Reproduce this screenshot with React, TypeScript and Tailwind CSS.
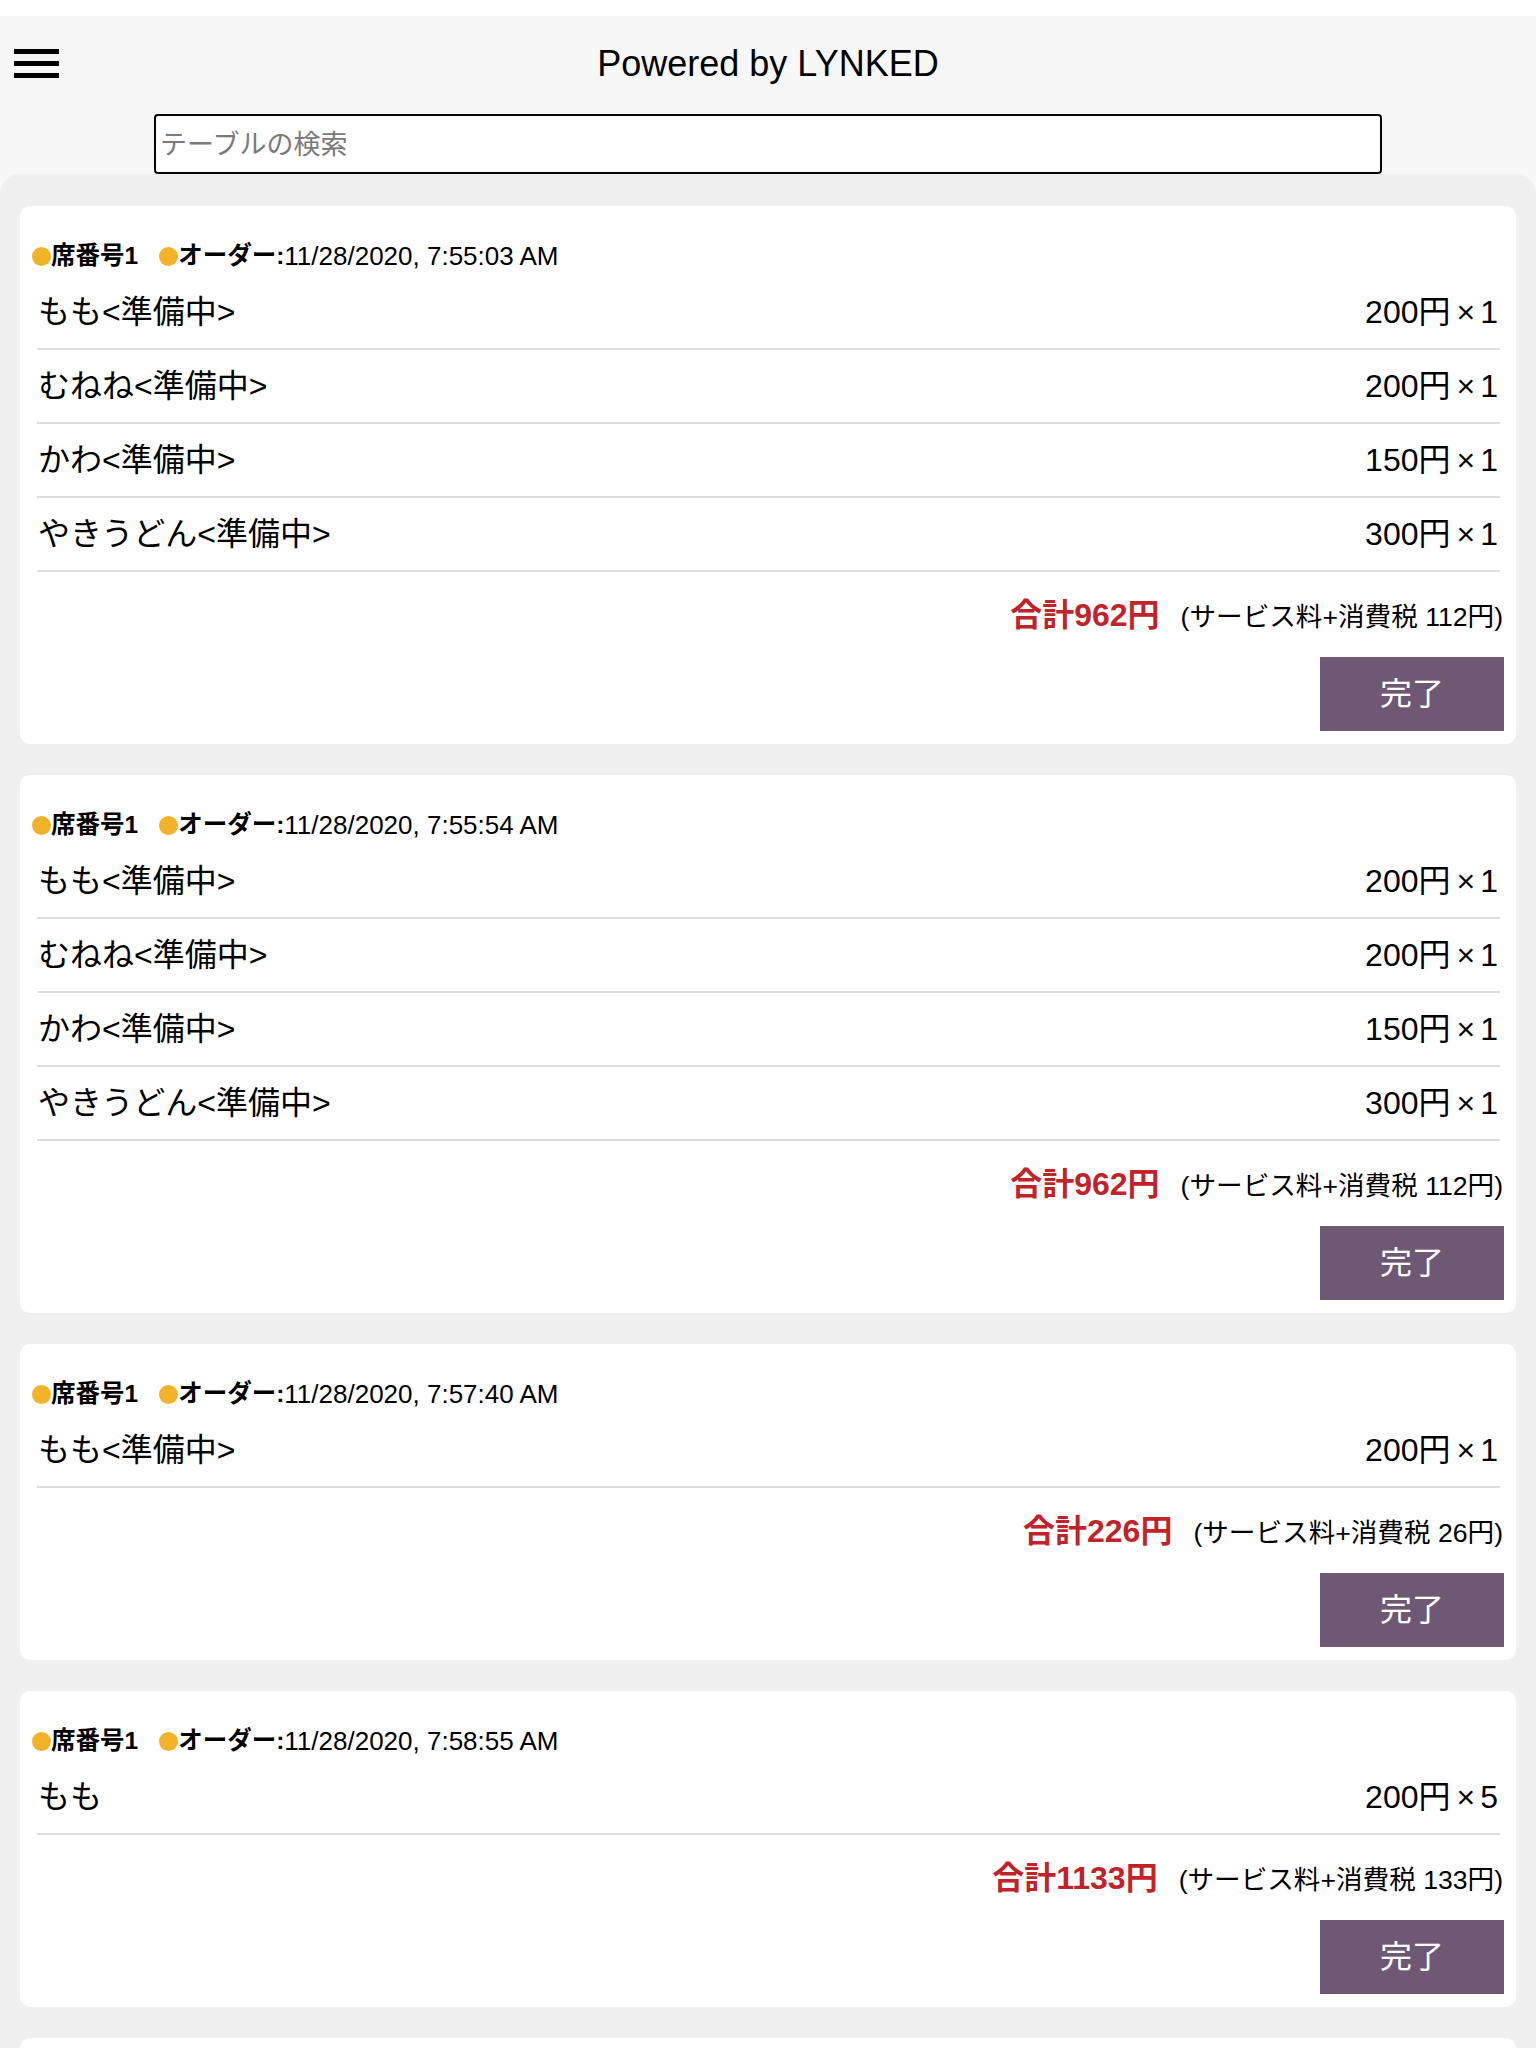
import React from "react";

type Item = { name: string; price: number; qty: number };
type Order = { time: string; items: Item[]; total: number; fee: number };

const four: Item[] = [
  { name: "もも<準備中>", price: 200, qty: 1 },
  { name: "むねね<準備中>", price: 200, qty: 1 },
  { name: "かわ<準備中>", price: 150, qty: 1 },
  { name: "やきうどん<準備中>", price: 300, qty: 1 },
];

const orders: Order[] = [
  { time: "11/28/2020, 7:55:03 AM", items: four, total: 962, fee: 112 },
  { time: "11/28/2020, 7:55:54 AM", items: four, total: 962, fee: 112 },
  {
    time: "11/28/2020, 7:57:40 AM",
    items: [{ name: "もも<準備中>", price: 200, qty: 1 }],
    total: 226,
    fee: 26,
  },
  {
    time: "11/28/2020, 7:58:55 AM",
    items: [{ name: "もも", price: 200, qty: 5 }],
    total: 1133,
    fee: 133,
  },
  {
    time: "11/28/2020, 7:59:30 AM",
    items: [{ name: "かわ", price: 150, qty: 2 }],
    total: 339,
    fee: 39,
  },
];

function Dot() {
  return <span className="inline-block w-[19px] h-[19px] rounded-full bg-[#f2b32a] shrink-0" />;
}

function OrderCard({ order }: { order: Order }) {
  return (
    <div className="bg-white rounded-[10px] pt-[30px] pb-[13px]">
      <div className="h-[40px] pl-[12px] flex items-center text-black">
        <Dot />
        <span className="font-bold text-[24.5px]">席番号1</span>
        <span className="ml-[21px]" />
        <Dot />
        <span className="font-bold text-[24.5px]">オーダー:</span>
        <span className="text-[26px]">{order.time}</span>
      </div>
      <div className="ml-[17px] mr-[16px]">
        {order.items.map((it, i) => (
          <div
            key={i}
            className="h-[74px] border-b-2 border-[#dddddd] flex items-center justify-between text-[32px] text-black"
          >
            <span className="pl-[1px]">{it.name}</span>
            <span className="pr-[2px] whitespace-pre">
              {it.price}円<span className="ml-[6px]">×</span>
              <span className="ml-[5px]">{it.qty}</span>
            </span>
          </div>
        ))}
      </div>
      <div className="h-[85px] flex items-center justify-end pr-[13px]">
        <div className="flex items-baseline">
          <span className="text-[32px] font-bold text-[#c1232b]">合計{order.total}円</span>
          <span className="ml-[21px] text-[26.6px] text-black">
            (サービス料+消費税 {order.fee}円)
          </span>
        </div>
      </div>
      <div className="flex justify-end pr-[12px]">
        <button className="w-[184px] h-[74px] bg-[#6f5873] text-white text-[32px] flex items-center justify-center">
          完了
        </button>
      </div>
    </div>
  );
}

export default function App() {
  return (
    <div
      className="min-h-screen bg-white pt-[16px]"
      style={{ fontFamily: '"Liberation Sans", "Noto Sans CJK JP", sans-serif' }}
    >
      <div className="bg-[#f7f7f7]">
        <div className="h-[94px] grid grid-cols-[1fr_auto_1fr] items-center">
          <div className="pl-[14px] flex flex-col gap-[7px] w-fit">
            <span className="block w-[45px] h-[5px] bg-black" />
            <span className="block w-[45px] h-[5px] bg-black" />
            <span className="block w-[45px] h-[5px] bg-black" />
          </div>
          <div className="text-[36px] text-black leading-none pt-[2px]">Powered by LYNKED</div>
          <div />
        </div>
        <div className="flex justify-center mt-[4px]">
          <input
            type="text"
            placeholder="テーブルの検索"
            className="w-[1228px] h-[60px] border-2 border-black rounded-[4px] bg-white px-[4px] pt-[2px] text-[27px] placeholder:text-[#7a7a7a] outline-none"
          />
        </div>
        <main className="bg-[#f0f0f0] rounded-t-[20px] px-[20px] pt-[32px] pb-[32px] flex flex-col gap-[31px]">
          {orders.map((o, i) => (
            <OrderCard key={i} order={o} />
          ))}
        </main>
      </div>
    </div>
  );
}
